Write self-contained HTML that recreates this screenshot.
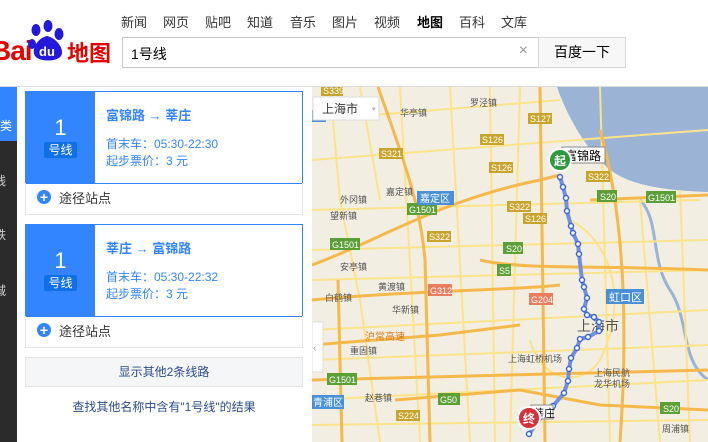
<!DOCTYPE html>
<html><head><meta charset="utf-8"><style>
*{margin:0;padding:0;box-sizing:border-box}
body{width:708px;height:442px;overflow:hidden;background:#fff;font-family:"Liberation Sans","Noto Sans CJK SC",sans-serif;position:relative}
.a{position:absolute}
.nav{top:12px;font-size:13px;color:#333}
.card{position:absolute;left:25px;width:278px;border:1px solid #3385ff;height:93px;background:#fff}
.num{position:absolute;left:0;top:0;width:69px;height:91px;background:#3385ff;color:#fff;text-align:center}
.num b{display:block;font-weight:normal;font-size:22px;margin-top:23px}
.num span{display:inline-block;background:#0f6fe8;font-size:12px;padding:0 4px;border-radius:2px;line-height:16px}
.t{position:absolute;left:80px;top:13px;color:#3385ff;font-weight:bold;font-size:13px}
.i{position:absolute;left:80px;font-size:12px;color:#3385ff}
.row{position:absolute;left:25px;width:278px;height:32px;border:1px solid #e4e4e4;border-top:none;font-size:13px;color:#333;padding:5px 0 0 33px}
.plus{position:absolute;left:11px;top:7px;width:14px;height:14px;border-radius:50%;background:#3385ff;color:#fff;font-size:14px;line-height:14px;text-align:center;font-weight:bold}
</style></head><body>
<div class="a" style="left:-9px;top:35px;font:bold 28px 'Liberation Sans',sans-serif;color:#e10602;letter-spacing:-1px">Bai</div>
<svg class="a" style="left:27px;top:20px" width="40" height="44" viewBox="0 0 40 44">
<ellipse cx="9" cy="10" rx="4.5" ry="6" fill="#2319dc"/><ellipse cx="21" cy="6" rx="4.5" ry="6" fill="#2319dc"/><ellipse cx="32" cy="14" rx="4.5" ry="6" fill="#2319dc"/><ellipse cx="5" cy="24" rx="4" ry="5" fill="#2319dc"/>
<path d="M20 16 C10 18 4 30 8 36 C12 42 30 42 34 36 C38 30 30 18 20 16Z" fill="#2319dc"/>
<text x="20" y="36" fill="#fff" font-size="13" font-weight="bold" text-anchor="middle" font-family="Liberation Sans">du</text></svg>
<div class="a" style="left:67px;top:36px;font-size:22px;font-weight:bold;color:#e10602">地图</div>
<div class="a nav" style="left:121px">新闻</div><div class="a nav" style="left:163px">网页</div><div class="a nav" style="left:205px">贴吧</div><div class="a nav" style="left:247px">知道</div><div class="a nav" style="left:290px">音乐</div><div class="a nav" style="left:332px">图片</div><div class="a nav" style="left:374px">视频</div><div class="a nav" style="left:417px;font-weight:bold;color:#000">地图</div><div class="a nav" style="left:459px">百科</div><div class="a nav" style="left:501px">文库</div>
<div class="a" style="left:122px;top:37px;width:417px;height:31px;border:1px solid #c8c8c8;font-size:14px;padding:6px 8px;color:#000">1号线<span style="position:absolute;right:10px;top:4px;color:#999;font-size:16px">×</span></div>
<div class="a" style="left:538px;top:37px;width:88px;height:31px;border:1px solid #d8d8d8;background:#f7f7f7;font-size:14px;text-align:center;line-height:29px;color:#000">百度一下</div>
<div class="a" style="left:0;top:86px;width:708px;height:1px;background:#ddd"></div>
<div class="a" style="left:0;top:87px;width:17px;height:355px;background:#2b2b2b"></div>
<div class="a" style="left:0;top:87px;width:17px;height:54px;background:#3385ff;color:#fff;font-size:12px;padding-top:30px">类</div>
<div class="a" style="left:-6px;top:172px;color:#ccc;font-size:12px">线</div>
<div class="a" style="left:-6px;top:226px;color:#ccc;font-size:12px">铁</div>
<div class="a" style="left:-6px;top:282px;color:#ccc;font-size:12px">城</div>

<div class="card" style="top:91px"><div class="num"><b>1</b><span>号线</span></div><div class="t">富锦路 → 莘庄</div><div class="i" style="top:43px">首末车：05:30-22:30</div><div class="i" style="top:60px">起步票价：3 元</div></div>
<div class="row" style="top:183px"><span class="plus">+</span>途径站点</div>
<div class="card" style="top:224px"><div class="num"><b>1</b><span>号线</span></div><div class="t">莘庄 → 富锦路</div><div class="i" style="top:43px">首末车：05:30-22:32</div><div class="i" style="top:60px">起步票价：3 元</div></div>
<div class="row" style="top:316px"><span class="plus">+</span>途径站点</div>
<div class="a" style="left:25px;top:357px;width:278px;height:30px;border:1px solid #e4e4e4;background:#f5f6f8;text-align:center;line-height:28px;font-size:12px;color:#2c4c8c">显示其他2条线路</div>
<div class="a" style="left:25px;top:398px;width:278px;text-align:center;font-size:12px;color:#2c4c8c">查找其他名称中含有"1号线"的结果</div>

<svg class="a" style="left:312px;top:87px" width="396" height="355" viewBox="312 87 396 355" font-family="Liberation Sans,Noto Sans CJK SC,sans-serif" font-size="10">
<rect x="312" y="87" width="396" height="355" fill="#f2eee2"/>
<path d="M557 87 C565 110 580 140 600 160 C615 178 640 190 708 192 L708 87Z" fill="#9bb4d6"/>
<path d="M640 200 C660 220 650 260 670 290 C690 320 680 360 708 380" fill="none" stroke="#9bb4d6" stroke-width="3"/>
<g stroke="#fbe38a" stroke-width="2" fill="none">
<path d="M330 87 L340 200 L360 300 L380 442"/><path d="M312 160 L708 130"/><path d="M312 250 L708 240"/><path d="M450 87 L470 442"/><path d="M520 87 L510 442"/><path d="M312 330 L708 310"/><path d="M640 200 L660 442"/><path d="M312 400 L708 380"/><path d="M400 87 L420 442"/><path d="M312 210 L700 200"/>
<path d="M312 120 L560 100"/><path d="M360 87 L380 200"/><path d="M490 87 L495 442"/><path d="M312 280 L708 270"/><path d="M312 360 L708 345"/><path d="M600 87 L610 442"/><path d="M680 190 L690 442"/><path d="M312 425 L708 420"/><path d="M570 220 C610 240 630 300 600 360 C580 390 540 380 530 340"/>
</g>
<g stroke="#f5b84b" stroke-width="3" fill="none">
<path d="M312 265 C380 240 440 200 540 180 L560 175"/><path d="M378 87 C400 150 420 200 425 260 L430 442"/><path d="M312 300 C420 290 520 290 560 285"/><path d="M312 345 L440 335 L520 325"/><path d="M540 87 L545 442"/><path d="M590 200 L708 195"/><path d="M395 400 L520 390 L600 405 L708 410"/><path d="M600 130 C620 200 630 300 620 442"/><path d="M312 380 L708 370"/><path d="M480 260 C520 270 600 265 708 270"/><path d="M338 280 L342 442"/>
</g>
<g font-size="9" fill="#fff">
<rect x="321" y="86" width="22" height="10" fill="#c9a42d"/><text x="323" y="94">S339</text>
<rect x="528" y="113" width="24" height="11" fill="#c9a42d"/><text x="530" y="122">S127</text>
<rect x="480" y="134" width="24" height="11" fill="#c9a42d"/><text x="482" y="143">S126</text>
<rect x="379" y="148" width="24" height="11" fill="#c9a42d"/><text x="381" y="157">S321</text>
<rect x="489" y="162" width="24" height="11" fill="#c9a42d"/><text x="491" y="171">S126</text>
<rect x="586" y="171" width="24" height="11" fill="#c9a42d"/><text x="588" y="180">S322</text>
<rect x="507" y="201" width="24" height="11" fill="#c9a42d"/><text x="509" y="210">S322</text>
<rect x="523" y="213" width="24" height="11" fill="#c9a42d"/><text x="525" y="222">S126</text>
<rect x="427" y="231" width="24" height="11" fill="#c9a42d"/><text x="429" y="240">S322</text>
<rect x="597" y="190" width="20" height="12" fill="#5d9f37"/><text x="600" y="200">S20</text>
<rect x="646" y="191" width="30" height="12" fill="#5d9f37"/><text x="648" y="201">G1501</text>
<rect x="407" y="203" width="30" height="12" fill="#5d9f37"/><text x="409" y="213">G1501</text>
<rect x="330" y="238" width="30" height="12" fill="#5d9f37"/><text x="332" y="248">G1501</text>
<rect x="503" y="242" width="20" height="12" fill="#5d9f37"/><text x="506" y="252">S20</text>
<rect x="497" y="264" width="14" height="12" fill="#5d9f37"/><text x="499" y="274">S5</text>
<rect x="428" y="284" width="24" height="12" fill="#e67e5f"/><text x="430" y="294">G312</text>
<rect x="529" y="293" width="24" height="12" fill="#e67e5f"/><text x="531" y="303">G204</text>
<rect x="327" y="373" width="30" height="12" fill="#5d9f37"/><text x="329" y="383">G1501</text>
<rect x="438" y="393" width="22" height="12" fill="#5d9f37"/><text x="440" y="403">G50</text>
<rect x="396" y="410" width="24" height="11" fill="#c9a42d"/><text x="398" y="419">S224</text>
<rect x="660" y="402" width="20" height="12" fill="#5d9f37"/><text x="663" y="412">S20</text>
<rect x="417" y="191" width="37" height="14" fill="#4a90d9"/><text x="420" y="202" font-size="10">嘉定区</text>
<rect x="606" y="289" width="38" height="15" fill="#4a90d9"/><text x="609" y="301" font-size="11">虹口区</text>
<rect x="312" y="395" width="32" height="14" fill="#4a90d9"/><text x="313" y="406" font-size="10">青浦区</text>
<rect x="312" y="110" width="14" height="12" fill="#4a90d9"/>
</g>
<g fill="#555" font-size="9">
<text x="470" y="106">罗泾镇</text><text x="400" y="116">华亭镇</text><text x="386" y="195">嘉定镇</text><text x="340" y="203">外冈镇</text><text x="330" y="219">望新镇</text><text x="340" y="270">安亭镇</text><text x="378" y="290">黄渡镇</text><text x="325" y="301">白鹤镇</text><text x="392" y="313">华新镇</text><text x="350" y="354">重固镇</text><text x="365" y="401">赵巷镇</text><text x="508" y="362">上海虹桥机场</text><text x="594" y="376">上海民航</text><text x="594" y="387">龙华机场</text><text x="662" y="432">周浦镇</text>
</g>
<text x="577" y="331" font-size="14" fill="#555">上海市</text>
<text x="365" y="340" font-size="10" fill="#d77a1a">沪常高速</text>
<rect x="313" y="97" width="66" height="23" fill="#fff" stroke="#ddd"/><text x="322" y="113" font-size="12" fill="#333">上海市</text><text x="372" y="111" font-size="7" fill="#aaa">▾</text>
<polyline points="560,177 563,187 566,198 567,211 571,226 573,233 578,244 579,254 582,280 584,287 587,298 584,309 587,315 594,317 599,322 599,331 588,337 580,339 577,348 571,358 569,369 568,381 564,393 553,406 543,415 529,434" fill="none" stroke="#6f8fe0" stroke-width="4"/>
<g fill="#fff" stroke="#3d68d6" stroke-width="1.5">
<circle cx="560" cy="177" r="2.5"/><circle cx="563" cy="187" r="2.5"/><circle cx="566" cy="198" r="2.5"/><circle cx="567" cy="211" r="2.5"/><circle cx="571" cy="226" r="2.5"/><circle cx="573" cy="233" r="2.5"/><circle cx="578" cy="244" r="2.5"/><circle cx="579" cy="254" r="2.5"/><circle cx="582" cy="280" r="2.5"/><circle cx="584" cy="287" r="2.5"/><circle cx="587" cy="298" r="2.5"/><circle cx="584" cy="309" r="2.5"/><circle cx="587" cy="315" r="2.5"/><circle cx="594" cy="317" r="2.5"/><circle cx="599" cy="322" r="2.5"/><circle cx="599" cy="331" r="2.5"/><circle cx="588" cy="337" r="2.5"/><circle cx="580" cy="339" r="2.5"/><circle cx="577" cy="348" r="2.5"/><circle cx="571" cy="358" r="2.5"/><circle cx="569" cy="369" r="2.5"/><circle cx="568" cy="381" r="2.5"/><circle cx="564" cy="393" r="2.5"/><circle cx="553" cy="406" r="2.5"/><circle cx="543" cy="415" r="2.5"/><circle cx="529" cy="434" r="2.5"/>
</g>
<rect x="562" y="147" width="43" height="16" fill="#fff" stroke="#888"/><text x="565" y="160" font-size="12" fill="#000">富锦路</text>
<circle cx="560" cy="160" r="11" fill="#2e9a3e" stroke="#fff" stroke-width="2"/><text x="560" y="165" font-size="12" fill="#fff" text-anchor="middle" font-weight="bold">起</text>
<rect x="531" y="405" width="22" height="14" fill="#fff" stroke="#888"/><text x="533" y="417" font-size="11" fill="#000">莘庄</text>
<circle cx="529" cy="418" r="11" fill="#d6313a" stroke="#fff" stroke-width="2"/><text x="529" y="423" font-size="12" fill="#fff" text-anchor="middle" font-weight="bold">终</text>
<rect x="312" y="322" width="11" height="50" fill="#fff" stroke="#ddd"/><text x="313" y="351" font-size="10" fill="#999">‹</text>
</svg>
</body></html>
